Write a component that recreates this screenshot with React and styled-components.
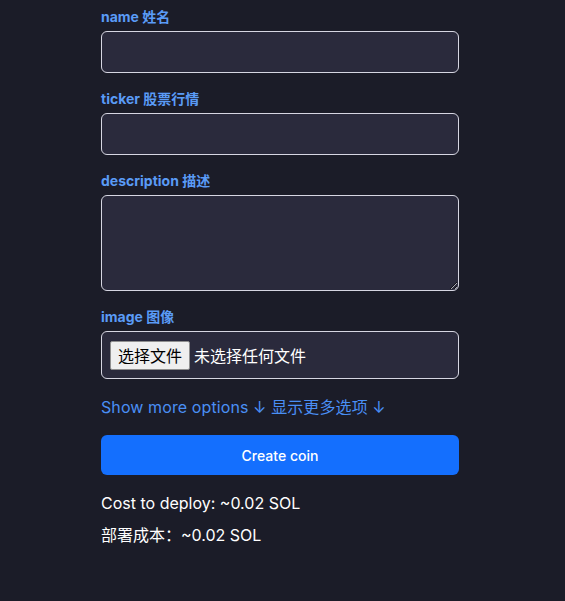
import React from "react";
import styled, { createGlobalStyle } from "styled-components";

const Global = createGlobalStyle`
  html, body { margin: 0; padding: 0; background: #1b1c28; }
  body { font-family: Inter, "Noto Sans CJK SC", sans-serif; color: #ffffff; }
  * { box-sizing: border-box; }
`;

const Page = styled.div`
  min-height: 601px;
  background: #1b1c28;
  padding: 7px 0 0 101px;
`;

const Form = styled.form`
  width: 358px;
  display: flex;
  flex-direction: column;
`;

const Field = styled.div`
  display: flex;
  flex-direction: column;
  gap: 4px;
  margin-bottom: 16px;
`;

const Label = styled.label`
  font-family: Inter, "Noto Sans CJK SC", sans-serif;
  font-size: 14px;
  line-height: 20px;
  font-weight: 700;
  color: #5a9bf6;
`;

const Input = styled.input`
  width: 100%;
  height: 42px;
  background: #2a2a3c;
  border: 1px solid #d6d6e2;
  border-radius: 6px;
  color: #fff;
  padding: 8px;
  font-size: 16px;
  outline: none;
`;

const TextArea = styled.textarea`
  width: 100%;
  height: 96px;
  background: #2a2a3c;
  border: 1px solid #d6d6e2;
  border-radius: 6px;
  color: #fff;
  padding: 8px;
  font-size: 16px;
  display: block;
  outline: none;
`;

const FileBox = styled.div`
  height: 48px;
  background: #2a2a3c;
  border: 1px solid #d6d6e2;
  border-radius: 6px;
  display: flex;
  align-items: center;
  padding: 0 8px 0 8px;
  gap: 4px;
`;

const FileButton = styled.span`
  height: 29px;
  padding: 0 7px;
  background: #efefef;
  border: 1px solid #8f8f8f;
  border-radius: 2px;
  color: #000;
  font-family: "Noto Sans CJK SC", sans-serif;
  font-size: 16px;
  line-height: 27px;
  display: inline-flex;
  align-items: center;
`;

const FileText = styled.span`
  font-family: "Noto Sans CJK SC", sans-serif;
  font-size: 16px;
  color: #fff;
`;

const MoreLink = styled.div`
  font-family: Inter, "Noto Sans CJK SC", sans-serif;
  font-size: 16px;
  line-height: 24px;
  color: #4a8ff5;
  margin-bottom: 16px;
  letter-spacing: 0.1px;
  cursor: pointer;
`;

const CreateButton = styled.button`
  height: 40px;
  width: 100%;
  background: #146ffe;
  border: none;
  border-radius: 6px;
  color: #fff;
  font-family: Inter, sans-serif;
  font-size: 14px;
  font-weight: 500;
  margin-bottom: 16px;
`;

const Cost = styled.div`
  font-family: Inter, "Noto Sans CJK SC", sans-serif;
  font-size: 16px;
  line-height: 24px;
  color: #fff;
  margin-bottom: ${(p) => (p.$last ? "0" : "8px")};
`;

export default function App() {
  return (
    <>
      <Global />
      <Page>
        <Form onSubmit={(e) => e.preventDefault()}>
          <Field>
            <Label>name 姓名</Label>
            <Input type="text" />
          </Field>
          <Field>
            <Label>ticker 股票行情</Label>
            <Input type="text" />
          </Field>
          <Field>
            <Label>description 描述</Label>
            <TextArea />
          </Field>
          <Field>
            <Label>image 图像</Label>
            <FileBox>
              <FileButton>选择文件</FileButton>
              <FileText>未选择任何文件</FileText>
            </FileBox>
          </Field>
          <MoreLink>Show more options ↓ 显示更多选项 ↓</MoreLink>
          <CreateButton type="submit">Create coin</CreateButton>
          <Cost>Cost to deploy: ~0.02 SOL</Cost>
          <Cost $last>部署成本：~0.02 SOL</Cost>
        </Form>
      </Page>
    </>
  );
}
